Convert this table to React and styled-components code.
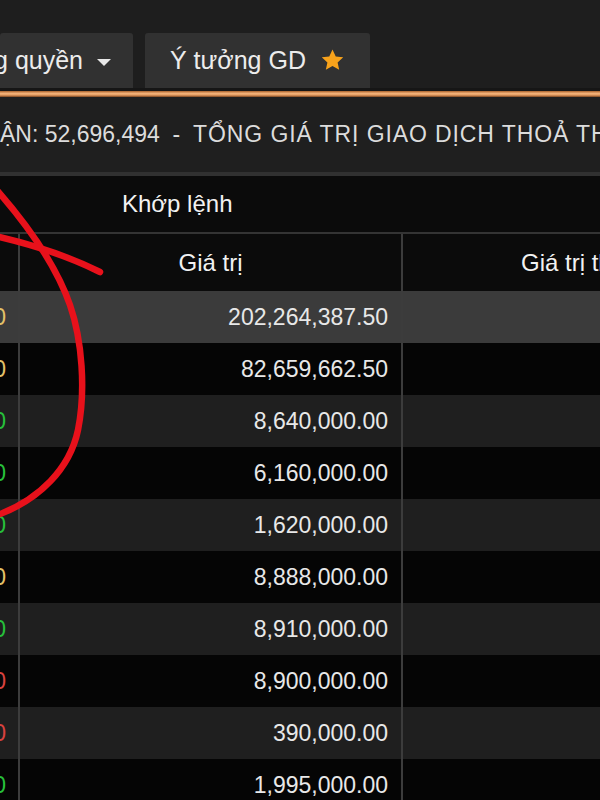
import React from "react";
import styled, { createGlobalStyle } from "styled-components";

const GlobalStyle = createGlobalStyle`
  html, body {
    margin: 0;
    padding: 0;
    background: #1d1d1d;
  }
  body {
    font-family: "Liberation Sans", Arial, sans-serif;
  }
`;

const Page = styled.div`
  position: relative;
  width: 600px;
  height: 800px;
  overflow: hidden;
  background: #1d1d1d;
  color: #e6e6e6;
`;

const TabBar = styled.div`
  display: flex;
  align-items: flex-end;
  gap: 12px;
  height: 91px;
  background: #1e1e1e;
  box-sizing: border-box;
  border-bottom: 3px solid #161616;
`;

const Tab = styled.div`
  display: flex;
  align-items: center;
  justify-content: ${(p) => (p.$clip ? "flex-end" : "flex-start")};
  gap: 14px;
  width: ${(p) => p.$width}px;
  height: 55px;
  padding: ${(p) => (p.$clip ? "0 22px 0 0" : "0 0 0 25px")};
  box-sizing: border-box;
  overflow: hidden;
  white-space: nowrap;
  background: #313131;
  border-radius: 3px 3px 0 0;
  font-size: 25px;
  color: #ececec;
`;

const Caret = styled.span`
  width: 0;
  height: 0;
  border-left: 7px solid transparent;
  border-right: 7px solid transparent;
  border-top: 7px solid #e8e8e8;
  margin-top: 3px;
`;

const AccentLine = styled.div`
  height: 6px;
  background: linear-gradient(#a8602a, #f2b27a 40%, #e9a165 65%, #7a4420);
`;

const InfoBar = styled.div`
  display: flex;
  align-items: center;
  height: 75px;
  white-space: pre;
  overflow: hidden;
  background: #1f1f1f;
  border-bottom: 4px solid #313131;
  font-size: 23px;
  color: #dcdcdc;
`;

const InfoPart = styled.span`
  letter-spacing: ${(p) => p.$spacing || 0}px;
`;

const Table = styled.div`
  display: grid;
  grid-template-columns: 20px 383px 1fr;
  background: #050505;
`;

const GroupHead = styled.div`
  grid-column: 1 / -1;
  display: flex;
  align-items: center;
  height: 56px;
  padding-left: 122px;
  background: #0b0b0b;
  border-bottom: 2px solid #343434;
  font-size: 24px;
  color: #f2f2f2;
`;

const HeadCell = styled.div`
  display: flex;
  align-items: center;
  justify-content: ${(p) => p.$justify || "center"};
  height: 57px;
  padding-left: ${(p) => p.$indent || 0}px;
  background: #0b0b0b;
  border-right: ${(p) => (p.$last ? "none" : "2px solid #3c3c3c")};
  overflow: hidden;
  white-space: nowrap;
  font-size: 24px;
  color: #f2f2f2;
`;

const Cell = styled.div`
  display: flex;
  align-items: center;
  justify-content: flex-end;
  height: 52px;
  padding-right: ${(p) => p.$pad}px;
  overflow: hidden;
  white-space: nowrap;
  background: ${(p) => p.$bg};
  border-right: ${(p) => (p.$last ? "none" : "2px solid #3c3c3c")};
  font-size: 23px;
  color: ${(p) => p.$color || "#e8e8e8"};
`;

const Annotation = styled.svg`
  position: absolute;
  left: 0;
  top: 0;
  pointer-events: none;
`;

const Star = () => (
  <svg width="25" height="25" viewBox="0 0 24 24">
    <path
      d="M12 1.5l3.1 6.6 7.2.8-5.4 4.9 1.5 7.1L12 17.3l-6.4 3.6 1.5-7.1L1.7 8.9l7.2-.8z"
      fill="#f7a21b"
    />
  </svg>
);

const colors = {
  yellow: "#e3c169",
  green: "#27c03b",
  red: "#d9423f",
};

const rows = [
  { p: "25.50", c: "yellow", v: "202,264,387.50" },
  { p: "25.50", c: "yellow", v: "82,659,662.50" },
  { p: "27.20", c: "green", v: "8,640,000.00" },
  { p: "30.80", c: "green", v: "6,160,000.00" },
  { p: "32.40", c: "green", v: "1,620,000.00" },
  { p: "22.20", c: "yellow", v: "8,888,000.00" },
  { p: "29.70", c: "green", v: "8,910,000.00" },
  { p: "17.80", c: "red", v: "8,900,000.00" },
  { p: "19.50", c: "red", v: "390,000.00" },
  { p: "39.90", c: "green", v: "1,995,000.00" },
];

const rowBg = (i) => (i === 0 ? "#3b3b3b" : i % 2 === 1 ? "#050505" : "#1f1f1f");

export default function App() {
  return (
    <Page>
      <GlobalStyle />
      <TabBar>
        <Tab $clip $width={133}>
          Chứng quyền
          <Caret />
        </Tab>
        <Tab $width={225}>
          Ý tưởng GD
          <Star />
        </Tab>
      </TabBar>
      <AccentLine />
      <InfoBar>
        <InfoPart>{"ẬN: 52,696,494  -  "}</InfoPart>
        <InfoPart $spacing={0.9}>{"TỔNG GIÁ TRỊ GIAO DỊCH THOẢ THUẬN: 4,128,500,000"}</InfoPart>
      </InfoBar>
      <Table>
        <GroupHead>Khớp lệnh</GroupHead>
        <HeadCell />
        <HeadCell>Giá trị</HeadCell>
        <HeadCell $last $justify="flex-start" $indent={118}>
          Giá trị thoả thuận
        </HeadCell>
        {rows.map((r, i) => (
          <React.Fragment key={i}>
            <Cell $bg={rowBg(i)} $pad={12} $color={colors[r.c]}>
              {r.p}
            </Cell>
            <Cell $bg={rowBg(i)} $pad={13}>
              {r.v}
            </Cell>
            <Cell $bg={rowBg(i)} $pad={0} $last />
          </React.Fragment>
        ))}
      </Table>
      <Annotation width="600" height="800" viewBox="0 0 600 800">
        <g fill="none" stroke="#e8111b" strokeWidth="6.5" strokeLinecap="round">
          <path d="M -5 188 C 25 222, 55 262, 70 305 C 82 340, 86 390, 78 430 C 70 468, 40 500, -5 516" />
          <path d="M -5 236 C 30 244, 70 257, 100 272" />
        </g>
      </Annotation>
    </Page>
  );
}
